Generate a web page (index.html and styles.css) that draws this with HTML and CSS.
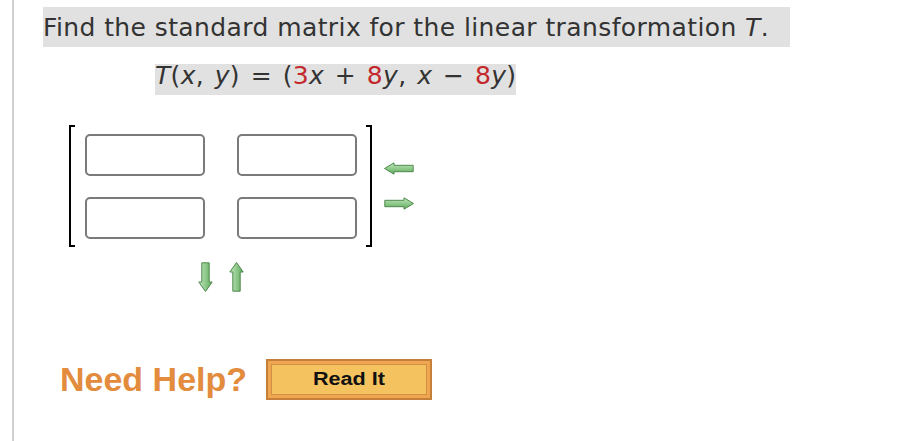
FILE: index.html
```html
<!DOCTYPE html>
<html lang="en">
<head>
    <meta charset="UTF-8">
    <meta name="viewport" content="width=device-width, initial-scale=1.0">
    <title>Standard matrix</title>
    <link rel="stylesheet" href="styles.css">
</head>
<body>
    <div class="question">
        <div class="prompt">Find the standard matrix for the linear transformation <i>T</i>.</div>

        <div class="equation"><i>T</i>(<i>x</i>, <i>y</i>) = (<span class="num">3</span><i>x</i> + <span class="num">8</span><i>y</i>, <i>x</i> &minus; <span class="num">8</span><i>y</i>)</div>

        <div class="matrix-area">
            <div class="matrix-row">
                <div class="matrix">
                    <div class="bracket left"></div>
                    <div class="cells">
                        <input type="text" autocomplete="off">
                        <input type="text" autocomplete="off">
                        <input type="text" autocomplete="off">
                        <input type="text" autocomplete="off">
                    </div>
                    <div class="bracket right"></div>
                </div>

                <!-- кнопки добавления/удаления столбцов -->
                <div class="side-arrows">
                    <svg width="30" height="13" viewBox="0 0 30 13">
                        <defs>
                            <linearGradient id="gh1" x1="0" y1="0" x2="0" y2="1">
                                <stop offset="0" stop-color="#c2e8bd"/>
                                <stop offset="1" stop-color="#5eab5c"/>
                            </linearGradient>
                        </defs>
                        <path d="M0.5 6.5 L10 0.8 L10 3.3 L29.2 3.3 L29.2 9.7 L10 9.7 L10 12.2 Z" fill="url(#gh1)" stroke="#4f8a4d" stroke-width="1"/>
                    </svg>
                    <svg width="30" height="13" viewBox="0 0 30 13">
                        <defs>
                            <linearGradient id="gh2" x1="0" y1="0" x2="0" y2="1">
                                <stop offset="0" stop-color="#c2e8bd"/>
                                <stop offset="1" stop-color="#5eab5c"/>
                            </linearGradient>
                        </defs>
                        <path d="M29.5 6.5 L20 0.8 L20 3.3 L0.8 3.3 L0.8 9.7 L20 9.7 L20 12.2 Z" fill="url(#gh2)" stroke="#4f8a4d" stroke-width="1"/>
                    </svg>
                </div>
            </div>

            <!-- кнопки добавления/удаления строк -->
            <div class="bottom-arrows">
                <svg width="15" height="30" viewBox="0 0 15 30">
                    <defs>
                        <linearGradient id="gv1" x1="0" y1="0" x2="1" y2="0">
                            <stop offset="0" stop-color="#c2e8bd"/>
                            <stop offset="1" stop-color="#5eab5c"/>
                        </linearGradient>
                    </defs>
                    <path d="M7.5 29.5 L0.8 20 L3.8 20 L3.8 0.8 L11.2 0.8 L11.2 20 L14.2 20 Z" fill="url(#gv1)" stroke="#4f8a4d" stroke-width="1"/>
                </svg>
                <svg width="15" height="30" viewBox="0 0 15 30">
                    <defs>
                        <linearGradient id="gv2" x1="0" y1="0" x2="1" y2="0">
                            <stop offset="0" stop-color="#c2e8bd"/>
                            <stop offset="1" stop-color="#5eab5c"/>
                        </linearGradient>
                    </defs>
                    <path d="M7.5 0.5 L0.8 10 L3.8 10 L3.8 29.2 L11.2 29.2 L11.2 10 L14.2 10 Z" fill="url(#gv2)" stroke="#4f8a4d" stroke-width="1"/>
                </svg>
            </div>
        </div>

        <div class="help">
            <span class="help-label">Need Help?</span>
            <button class="read-it"><span>Read It</span></button>
        </div>
    </div>
</body>
</html>
```

FILE: styles.css
```css
* {
    margin: 0;
    padding: 0;
    box-sizing: border-box;
}

body {
    background: #fff;
    height: 100vh;
    font-family: 'DejaVu Sans', Verdana, sans-serif;
    color: #333;
}

.question {
    margin-left: 12px;
    height: 100vh;
    border-left: 2px solid #d0d0d0;
    padding-left: 29px;
    padding-top: 7px;
}

.prompt {
    width: 747px;
    background: #e1e1e1;
    font-size: 25px;
    line-height: 34px;
    letter-spacing: 0.4px;
    padding: 4px 0 2px 0;
}

.equation {
    width: fit-content;
    margin-top: 17px;
    margin-left: 112px;
    background: #e1e1e1;
    font-size: 25px;
    line-height: 24px;
    letter-spacing: 0.3px;
    word-spacing: 2.5px;
    padding-bottom: 7px;
}

.num {
    color: #c3282b;
}

.matrix-area {
    margin-top: 30px;
    margin-left: 26px;
}

.matrix-row {
    display: flex;
}

.matrix {
    display: flex;
}

.bracket {
    width: 6px;
    border-top: 2px solid #000;
    border-bottom: 2px solid #000;
}

.bracket.left {
    border-left: 2px solid #000;
}

.bracket.right {
    border-right: 2px solid #000;
}

.cells {
    display: grid;
    grid-template-columns: 120px 120px;
    gap: 21px 32px;
    padding: 9px 9px 8px 10px;
}

.cells input {
    width: 120px;
    height: 42px;
    border: 2px solid #7a7a7a;
    border-radius: 5px;
    background: #fff;
    font-size: 16px;
    padding: 0 6px;
}

.side-arrows {
    display: flex;
    flex-direction: column;
    gap: 22px;
    margin-left: 12px;
    padding-top: 37px;
}

.side-arrows svg,
.bottom-arrows svg {
    display: block;
}

.bottom-arrows {
    width: 303px;
    display: flex;
    justify-content: center;
    gap: 16px;
    margin-top: 15px;
}

.help {
    display: flex;
    align-items: center;
    margin-top: 67px;
    margin-left: 17px;
}

.help-label {
    font-family: 'Liberation Sans', Arial, sans-serif;
    font-weight: bold;
    font-size: 34px;
    line-height: 41px;
    color: #e38c3e;
}

.read-it {
    margin-left: 19px;
    width: 166px;
    height: 41px;
    background: #f4c25e;
    border: 2px solid #c47f3a;
    box-shadow: inset 0 0 0 3px #f0a651, inset 0 0 0 4px #d08f45;
    font-family: 'Liberation Sans', Arial, sans-serif;
    font-weight: bold;
    font-size: 18px;
    color: #111;
    cursor: pointer;
}

.read-it span {
    display: inline-block;
    transform: scaleX(1.2);
}
```
